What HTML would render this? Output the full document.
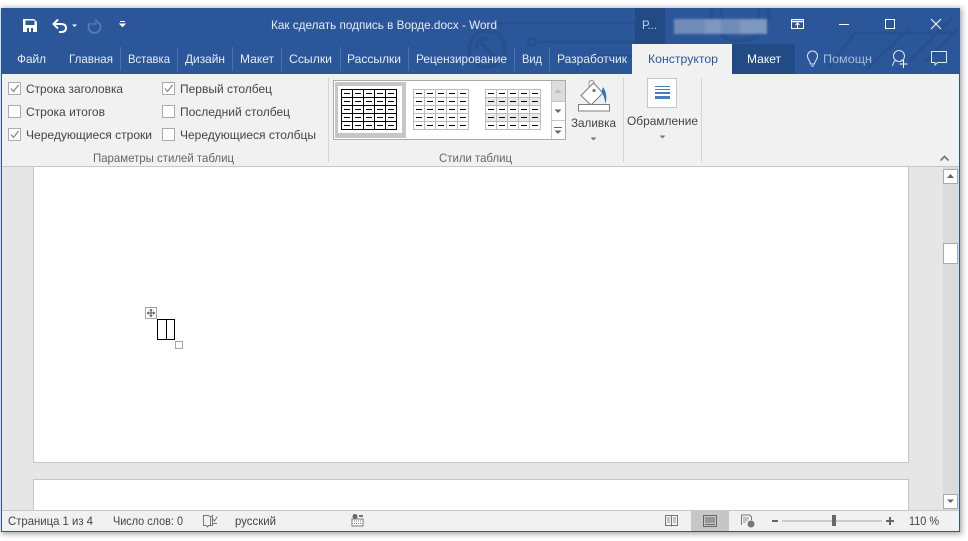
<!DOCTYPE html>
<html><head><meta charset="utf-8">
<style>
html,body{margin:0;padding:0;background:#fff;width:968px;height:541px;overflow:hidden}
svg{display:block}
text{font-family:"Liberation Sans",sans-serif;font-size:12px;fill:#444}
.t text{fill:#e6ecf5}
</style></head><body>
<svg width="968" height="541" viewBox="0 0 968 541" xmlns="http://www.w3.org/2000/svg">
<defs>
<filter id="b" x="-5%" y="-5%" width="110%" height="110%"><feGaussianBlur stdDeviation="3"/></filter>
<filter id="b2" x="-10%" y="-50%" width="120%" height="200%"><feGaussianBlur stdDeviation="1"/></filter>
<clipPath id="tc"><rect x="1" y="8" width="959" height="66"/></clipPath>
<pattern id="pk" x="341" y="89" width="11" height="8" patternUnits="userSpaceOnUse">
<rect x="0" y="0" width="11" height="1" fill="#000"/><rect x="0" y="0" width="1" height="8" fill="#000"/>
<rect x="3" y="4" width="6" height="1" fill="#000"/></pattern>
<pattern id="pg" x="413" y="89" width="11" height="8" patternUnits="userSpaceOnUse">
<rect x="0" y="0" width="11" height="1" fill="#bdbdbd"/><rect x="0" y="0" width="1" height="8" fill="#bdbdbd"/>
<rect x="3" y="4" width="6" height="1" fill="#000"/></pattern>
<pattern id="pg3" x="485" y="89" width="11" height="8" patternUnits="userSpaceOnUse">
<rect x="0" y="0" width="11" height="1" fill="#bdbdbd"/><rect x="0" y="0" width="1" height="8" fill="#bdbdbd"/>
<rect x="3" y="4" width="6" height="1" fill="#000"/></pattern>
</defs>

<!-- window shadow -->
<rect x="1" y="8" width="961" height="526" fill="#777" filter="url(#b)" opacity=".65"/>
<rect x="1" y="8" width="959" height="524" fill="#2b579a"/>

<!-- title decoration -->
<g fill="none" stroke="#27508f" stroke-width="3" clip-path="url(#tc)">
<path d="M495 23H640"/>
<circle cx="487" cy="49" r="18" stroke-width="4"/>
<path d="M477 39L495 57M477 39h11M477 39v11" stroke-width="4"/>
<circle cx="532" cy="42" r="4"/>
<path d="M536 42H640"/>
<path d="M575 74q5-16 25-18H640"/>
<circle cx="740" cy="12" r="29" stroke-width="4"/>
<circle cx="740" cy="12" r="19" stroke-width="3"/>
<path d="M828 68L855 33H958" stroke-width="3"/>
<path d="M868 68L910 28" stroke-width="3"/>
<path d="M908 62L953 17" stroke-width="3"/>
<path d="M925 62L958 29" stroke-width="3"/>
</g>

<!-- account -->
<rect x="635" y="8" width="30" height="36" fill="#224a85"/>
<text x="642" y="29" textLength="15" lengthAdjust="spacingAndGlyphs" style="fill:#c5d1e4">Р...</text>
<g filter="url(#b2)">
<rect x="674" y="19" width="93" height="15" fill="#6f8cb7"/>
<rect x="705" y="19" width="16" height="15" fill="#7d97bf"/>
<rect x="740" y="19" width="27" height="15" fill="#7e98c0"/>
</g>

<!-- QAT -->
<path d="M23 19h11l3 3v10h-14z" fill="#fff"/>
<rect x="25.500" y="20.500" width="9" height="4.500" fill="#2b579a"/>
<rect x="27" y="28" width="6" height="4" fill="#2b579a"/>
<rect x="29" y="28" width="2" height="4" fill="#fff"/>
<g fill="none" stroke="#fff">
<path d="M53 24h8q5 0 5 4t-5 4h-2" stroke-width="2"/>
<path d="M58 19.500l-4.500 4.500 4.500 4.500" stroke-width="2"/>
</g>
<path d="M72 24.500h5l-2.500 2.500z" fill="#fff"/>
<g fill="none" stroke="#5479ad" stroke-width="2">
<path d="M97 21.500a6 6 0 1 1-7 1.500"/><path d="M96 19v5h-5" stroke-width="1.500"/>
</g>
<path d="M120 21.500h5M120 24h5l-2.500 2.500z" stroke="#fff" stroke-width="1" fill="#fff"/>

<!-- title -->
<g class="t">
<text x="271" y="29" textLength="226" lengthAdjust="spacingAndGlyphs">Как сделать подпись в Ворде.docx - Word</text>
</g>

<!-- window controls -->
<g fill="none" stroke="#fff" stroke-width="1">
<rect x="791.500" y="19.500" width="12" height="9"/>
<path d="M791.500 21.500h12" stroke-width="1.500"/>
<path d="M797.500 28v-5M795.500 25l2-2 2 2"/>
<path d="M839 24.500h10"/>
<rect x="885.500" y="19.500" width="9" height="9"/>
<path d="M931 19l10 10M941 19l-10 10"/>
</g>

<!-- tab separators -->
<g fill="#4a71ab">
<rect x="120" y="47" width="1" height="24"/><rect x="177" y="47" width="1" height="24"/><rect x="232" y="47" width="1" height="24"/><rect x="281" y="47" width="1" height="24"/><rect x="340" y="47" width="1" height="24"/><rect x="408" y="47" width="1" height="24"/><rect x="514" y="47" width="1" height="24"/><rect x="549" y="47" width="1" height="24"/>
</g>
<g class="t">
<text x="17" y="63" textLength="29" lengthAdjust="spacingAndGlyphs">Файл</text>
<text x="69" y="63" textLength="44" lengthAdjust="spacingAndGlyphs">Главная</text>
<text x="128" y="63" textLength="42" lengthAdjust="spacingAndGlyphs">Вставка</text>
<text x="185" y="63" textLength="40" lengthAdjust="spacingAndGlyphs">Дизайн</text>
<text x="240" y="63" textLength="34" lengthAdjust="spacingAndGlyphs">Макет</text>
<text x="289" y="63" textLength="43" lengthAdjust="spacingAndGlyphs">Ссылки</text>
<text x="347" y="63" textLength="54" lengthAdjust="spacingAndGlyphs">Рассылки</text>
<text x="416" y="63" textLength="91" lengthAdjust="spacingAndGlyphs">Рецензирование</text>
<text x="522" y="63" textLength="20" lengthAdjust="spacingAndGlyphs">Вид</text>
<text x="557" y="63" textLength="70" lengthAdjust="spacingAndGlyphs">Разработчик</text>
</g>

<!-- ribbon -->
<rect x="2" y="74" width="957" height="92" fill="#f1f1f1"/>
<rect x="632" y="44" width="100" height="31" fill="#f1f1f1"/>
<text x="648" y="63" textLength="70" lengthAdjust="spacingAndGlyphs" style="fill:#2b579a">Конструктор</text>
<rect x="732" y="44" width="63" height="30" fill="#224a85"/>
<text x="747" y="63" textLength="34" lengthAdjust="spacingAndGlyphs" style="fill:#fff">Макет</text>

<!-- help and right icons -->
<g fill="none" stroke="#dfe6f0" stroke-width="1">
<path d="M810.500 64c0-3-3-4-3-8a5 5 0 0 1 10 0c0 4-3 5-3 8z"/>
<path d="M811 66h3"/>
<circle cx="899" cy="56" r="5.500"/>
<path d="M892.500 66q1-5 4-6M901 60q2 .5 3 2"/>
<path d="M903.500 60v8M899.500 64h8" stroke="#fff"/>
<path d="M931.500 51.500h15v11h-9l-2.500 2.500v-2.500h-3.500z"/>
</g>
<text x="823" y="63" textLength="49" lengthAdjust="spacingAndGlyphs" style="fill:#a9bcd8">Помощн</text>

<!-- checkboxes -->
<g fill="#fff" stroke="#ababab" stroke-width="1">
<rect x="8.500" y="82.500" width="12" height="12"/><rect x="8.500" y="105.500" width="12" height="12"/><rect x="8.500" y="128.500" width="12" height="12"/>
<rect x="162.500" y="82.500" width="12" height="12"/><rect x="162.500" y="105.500" width="12" height="12"/><rect x="162.500" y="128.500" width="12" height="12"/>
</g>
<g fill="none" stroke="#8a8a8a" stroke-width="1.300">
<path d="M11 88.500l2.500 3 5-6.500M11 134.500l2.500 3 5-6.500M165 88.500l2.500 3 5-6.500"/>
</g>
<text x="26" y="93" textLength="97" lengthAdjust="spacingAndGlyphs">Строка заголовка</text>
<text x="26" y="116" textLength="79" lengthAdjust="spacingAndGlyphs">Строка итогов</text>
<text x="26" y="139" textLength="126" lengthAdjust="spacingAndGlyphs">Чередующиеся строки</text>
<text x="180" y="93" textLength="92" lengthAdjust="spacingAndGlyphs">Первый столбец</text>
<text x="180" y="116" textLength="110" lengthAdjust="spacingAndGlyphs">Последний столбец</text>
<text x="180" y="139" textLength="136" lengthAdjust="spacingAndGlyphs">Чередующиеся столбцы</text>
<text x="93" y="162" textLength="141" lengthAdjust="spacingAndGlyphs" style="fill:#666">Параметры стилей таблиц</text>
<text x="439" y="162" textLength="73" lengthAdjust="spacingAndGlyphs" style="fill:#666">Стили таблиц</text>

<!-- ribbon group seps -->
<g fill="#d4d4d4">
<rect x="328" y="78" width="1" height="84"/><rect x="623" y="78" width="1" height="84"/><rect x="701" y="78" width="1" height="84"/>
</g>

<!-- gallery -->
<rect x="333.500" y="80.500" width="232" height="59" fill="#fff" stroke="#ababab"/>
<rect x="335" y="82" width="71" height="56" fill="#c6c6c6"/>
<rect x="338" y="86" width="64" height="47" fill="#fff"/>
<rect x="341" y="89" width="56" height="41" fill="url(#pk)"/>
<rect x="413" y="89" width="56" height="41" fill="url(#pg)"/>
<rect x="485" y="97" width="56" height="8" fill="#e9e9e9"/><rect x="485" y="113" width="56" height="8" fill="#e9e9e9"/>
<rect x="485" y="89" width="56" height="41" fill="url(#pg3)"/>
<rect x="551" y="81" width="14" height="20" fill="#dcdcdc"/>
<path d="M551.500 81v58M551 101.500h14M551 120.500h14" stroke="#c6c6c6" fill="none"/>
<path d="M558 89l3.500 4h-7z" fill="#bbb"/>
<path d="M554.500 109.500h7l-3.500 3.500z" fill="#666"/>
<path d="M554 127.500h8" stroke="#666"/><path d="M554.500 130.500h7l-3.500 3.500z" fill="#666"/>

<!-- bucket -->
<path d="M589 92v-9q0-2.500 2.500-2.500t2.500 2.500l.5 8" fill="none" stroke="#999"/>
<path d="M593.500 83l-12.500 12.500 10 9.500 12-12z" fill="#fff" stroke="#7d7d7d"/>
<circle cx="594" cy="90.500" r="1.600" fill="#777"/>
<path d="M603 87q5 7 2.500 17-1 -8-4-12z" fill="#2e75b6"/>
<rect x="578.500" y="104.500" width="31" height="6.500" fill="#fff" stroke="#7d7d7d"/>
<text x="571" y="127" textLength="45" lengthAdjust="spacingAndGlyphs">Заливка</text>
<path d="M590.500 137.500h6l-3 3z" fill="#777"/>

<!-- borders -->
<rect x="647.500" y="78.500" width="29" height="29" fill="#fff" stroke="#c6c6c6"/>
<g fill="#4a7ebb">
<rect x="655" y="86" width="15" height="1"/><rect x="655" y="89" width="15" height="1"/><rect x="655" y="92" width="15" height="2"/><rect x="655" y="96" width="15" height="3"/>
</g>
<text x="627" y="125" textLength="71" lengthAdjust="spacingAndGlyphs">Обрамление</text>
<path d="M659.500 135.500h6l-3 3z" fill="#777"/>

<!-- collapse -->
<path d="M940.500 160.500l4-4 4 4" fill="none" stroke="#777" stroke-width="1.800"/>

<!-- doc area -->
<rect x="2" y="166" width="957" height="1" fill="#c6c6c6"/>
<rect x="2" y="167" width="941" height="344" fill="#e6e6e6"/>
<rect x="33" y="167" width="1" height="296" fill="#c6c6c6"/>
<rect x="908" y="167" width="1" height="296" fill="#c6c6c6"/>
<rect x="34" y="167" width="874" height="295" fill="#fff"/>
<rect x="33" y="462" width="876" height="1" fill="#c6c6c6"/>
<rect x="33.500" y="479.500" width="875" height="40" fill="#fff" stroke="#c6c6c6"/>

<!-- table object -->
<rect x="145.500" y="307.500" width="11" height="11" fill="#fff" stroke="#a6a6a6"/>
<path d="M151 309.500v7M147.500 313h7" stroke="#555" stroke-width="1"/>
<path d="M151 309l-1.500 1.500h3zM151 317l-1.500-1.500h3zM147 313l1.500-1.500v3zM155 313l-1.500-1.500v3z" fill="#555" stroke="#555" stroke-width=".5"/>
<rect x="157.500" y="319.500" width="17" height="20" fill="#fff" stroke="#000"/>
<path d="M166.500 319.500v20" stroke="#000"/>
<rect x="175.500" y="341.500" width="7" height="7" fill="#fff" stroke="#a6a6a6"/>

<!-- scrollbar -->
<rect x="943" y="167" width="16" height="344" fill="#dbdbdb"/>
<rect x="943.500" y="169.500" width="14" height="14" fill="#fff" stroke="#ababab"/>
<path d="M950.500 174l3.500 4h-7z" fill="#666"/>
<rect x="943.500" y="243.500" width="14" height="20" fill="#fff" stroke="#ababab"/>
<rect x="943.500" y="494.500" width="14" height="14" fill="#fff" stroke="#ababab"/>
<path d="M947 499.500h7l-3.500 3.500z" fill="#666"/>

<!-- status bar -->
<rect x="2" y="510" width="957" height="1" fill="#c6c6c6"/>
<rect x="2" y="511" width="957" height="20" fill="#f1f1f1"/>
<text x="8" y="525" textLength="85" lengthAdjust="spacingAndGlyphs">Страница 1 из 4</text>
<text x="113" y="525" textLength="70" lengthAdjust="spacingAndGlyphs">Число слов: 0</text>
<text x="235" y="525" textLength="41" lengthAdjust="spacingAndGlyphs">русский</text>
<g fill="none" stroke="#777">
<path d="M203.500 515.500h5l2 1.500 2-1.500v10h-4l-1 1.500-1-1.500h-3z"/><path d="M210.500 517v9"/><path d="M213 519l1.500 2 3-4.500" stroke-width="1"/>
<path d="M213 523.500h4"/>
</g>
<circle cx="355" cy="516.500" r="2.500" fill="#666"/>
<rect x="352" y="519" width="11" height="7" fill="#fff" stroke="#777" stroke-width="1"/>
<path d="M359 515h4v2h-4z" fill="#777"/>
<path d="M354 521h7M354 523.500h7" stroke="#777" stroke-dasharray="1 1"/>
<!-- view modes -->
<rect x="691" y="511" width="38" height="20" fill="#c6c6c6"/>
<g fill="none" stroke="#777">
<rect x="665.500" y="515.500" width="12" height="10"/><path d="M671.500 515.500v11"/>
<path d="M667 518h3M667 520h3M667 522h3M673 518h3M673 520h3M673 522h3" stroke-width=".8"/>
</g>
<g fill="none" stroke="#666">
<rect x="703.500" y="515.500" width="13" height="11"/>
<path d="M705 518h10M705 520h10M705 522h10M705 524.500h10"/>
</g>
<g fill="none" stroke="#777">
<path d="M741.500 525v-10h8l2 2v3"/><path d="M743 518h6M743 520h5M743 522h3" stroke-width=".8"/>
</g>
<circle cx="751" cy="524" r="3.500" fill="#777"/>
<rect x="772" y="520" width="6" height="2" fill="#666"/>
<rect x="782" y="520.500" width="100" height="1" fill="#a6a6a6"/>
<rect x="832" y="515" width="4" height="11" fill="#666"/>
<path d="M886 521h8M890 517v8" stroke="#666" stroke-width="2"/>
<text x="909" y="525" textLength="30" lengthAdjust="spacingAndGlyphs">110 %</text>
</svg>
</body></html>
